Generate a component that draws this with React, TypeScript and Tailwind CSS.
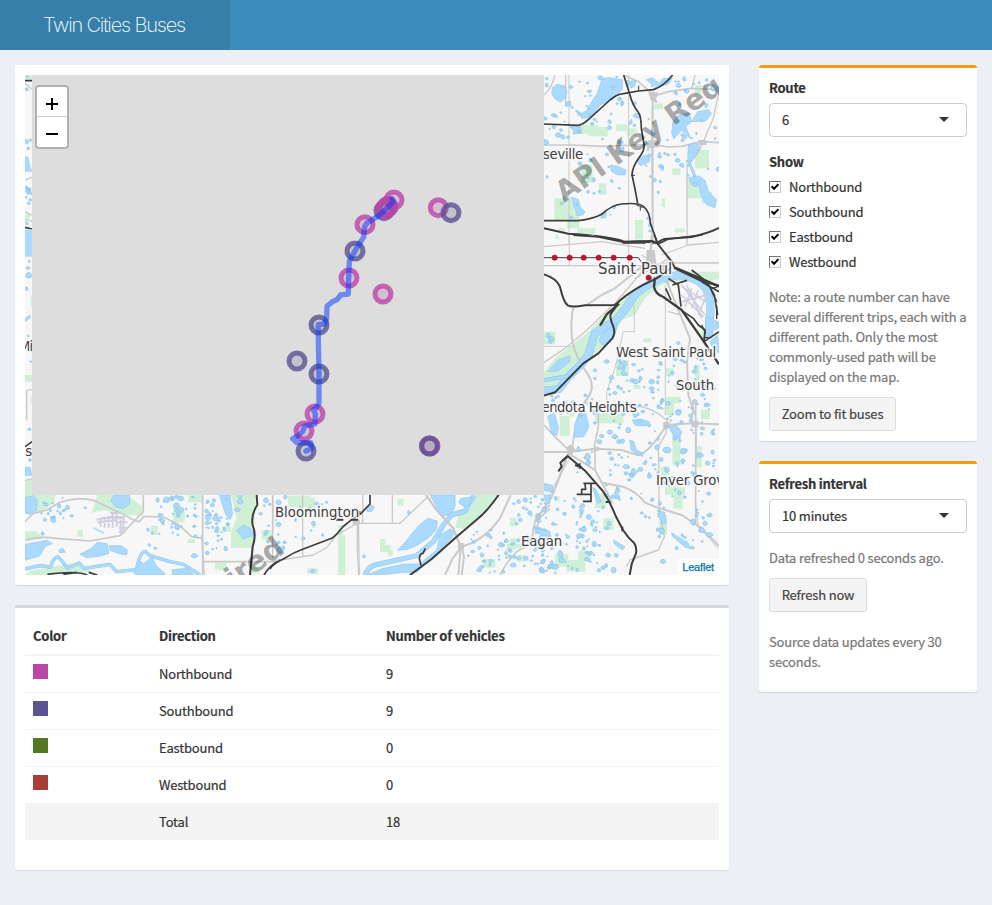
import React from "react";

const WATER = "#aadaff";
const SHORE = "#82bfe8";
const PARK = "#d0f0d5";
const ROAD = "#cacaca";
const RAIL = "#3d3d3d";

/* Each map sheet is drawn at three units to the pixel, from its own origin. */
function Sheet({ x, y, children }: { x: number; y: number; children: React.ReactNode }) {
  return <g transform={`translate(${x} ${y}) scale(0.33333)`}>{children}</g>;
}

function Blocks({ list }: { list: number[][] }) {
  return (
    <g fill={PARK}>
      {list.map((b, i) => (
        <rect key={i} x={b[0]} y={b[1]} width={b[2]} height={b[3]} />
      ))}
    </g>
  );
}

function Ponds({ list }: { list: number[][] }) {
  return (
    <g fill={WATER} stroke={SHORE} strokeWidth={2}>
      {list.map((p, i) => {
        const a = p[2] * (0.8 + (i % 3) * 0.2);
        const b = p[2] * (1.05 - (i % 4) * 0.12);
        return (
          <path
            key={i}
            d={`M${p[0] - a} ${p[1]}l${a * 0.6} ${-b}l${a * 0.9} ${b * 0.2}l${a * 0.5} ${b}l${-a * 0.6} ${b * 0.8}l${-a} ${-b * 0.2}z`}
          />
        );
      })}
    </g>
  );
}

/* Marsh ponds too small to be named: a repeatable scatter inside a box. */
function marsh(seed: number, n: number, x: number, y: number, w: number, h: number) {
  let s = seed;
  const next = () => {
    s = (s * 16807) % 2147483647;
    return s / 2147483647;
  };
  next();
  return Array.from({ length: n }, () => {
    const px = x + next() * w;
    const py = y + next() * h;
    const k = next();
    return [px, py, 2.5 + k * k * 4.5];
  });
}

function Water({ d }: { d: string }) {
  return <path d={d} fill={WATER} stroke={SHORE} strokeWidth={1.5} strokeLinejoin="round" />;
}
function River({ d, w }: { d: string; w: number }) {
  return (
    <g fill="none" strokeLinecap="butt" strokeLinejoin="round">
      <path d={d} stroke={SHORE} strokeWidth={w + 2} />
      <path d={d} stroke={WATER} strokeWidth={w} />
    </g>
  );
}
function Road({ d, w = 4 }: { d: string; w?: number }) {
  return <path d={d} fill="none" stroke={ROAD} strokeWidth={w} strokeLinejoin="round" />;
}
function Rail({ d, w = 6 }: { d: string; w?: number }) {
  return <path d={d} fill="none" stroke={RAIL} strokeWidth={w - 1} strokeLinejoin="round" />;
}

function Label({ x, y, len, size = 13.3, children }: { x: number; y: number; len: number; size?: number; children: string }) {
  return (
    <text
      x={x}
      y={y}
      textLength={len}
      fontSize={size}
      fill="#404040"
      stroke="#f7f7f7"
      strokeWidth={3}
      strokeOpacity={0.85}
      paintOrder="stroke"
      className="font-['DejaVu_Sans',sans-serif]"
    >
      {children}
    </text>
  );
}

function Watermark({ x, y, anchor, children }: { x: number; y: number; anchor: "start" | "end"; children: string }) {
  return (
    <text
      transform={`translate(${x} ${y}) rotate(-35)`}
      textAnchor={anchor}
      fontSize={29}
      fontWeight={700}
      fill="#000"
      fillOpacity={0.33}
      className="font-['DejaVu_Sans',sans-serif]"
    >
      {children}
    </text>
  );
}

function NorthEast() {
  return (
    <Sheet x={535} y={65}>
      <Blocks
        list={[
          [58, 400, 60, 65], [95, 440, 38, 50], [130, 180, 60, 26], [160, 186, 58, 28], [243, 178, 34, 20], [140, 300, 32, 54], [192, 355, 22, 34],
          [300, 465, 24, 58], [127, 490, 54, 16], [412, 310, 24, 20], [480, 255, 42, 55], [455, 345, 55, 55], [500, 380, 30, 36], [380, 400, 10, 26],
          [358, 116, 26, 16], [480, 60, 20, 25], [70, 490, 20, 12], [275, 190, 30, 22], [420, 490, 30, 12],
        ]}
      />
      <Road d="M102 30V540" w={3} />
      <Road d="M281 30V540" w={3} />
      <Road d="M353 80V540" w={6} />
      <Road d="M353 90L350 240L352 430" w={3} />
      <Road d="M456 540V305L490 262L505 230L535 160L552 80" w={4} />
      <Road d="M27 240L110 240L200 244L353 238L400 246L440 244L500 230L552 233" w={5} />
      <Road d="M265 30L310 50L345 80L360 92L400 80L470 70L552 74" w={5} />
      <Road d="M480 30L470 70M27 90Q50 70 60 30M92 30V125" w={4} />
      <path d="M340 225L370 225L375 245L335 252ZM340 82h30l-8 26h-14zM490 225h25v15h-25z" fill={ROAD} />
      <Water d="M52 68L66 58L88 62L96 78L92 98L76 112L58 100L50 84Z" />
      <Water d="M202 40L222 38L262 44L262 72L240 98L196 120L178 144L160 158L140 160L136 148L158 134L170 110L186 86Z" />
      <Water d="M92 112L106 108L108 122L94 124Z" />
      <Water d="M106 182L136 186L140 204L120 206Z" />
      <Water d="M288 48L302 46L300 64L286 70Z" />
      <Water d="M334 44L352 38L372 54L386 40L412 40L400 58L370 66L352 60Z" />
      <Water d="M414 168L430 150L462 144L470 170L452 184L468 222L440 196L416 222L410 204Z" />
      <Water d="M470 170L488 140L520 134L530 146L512 168Z" />
      <Water d="M460 240L480 232L494 244L484 270L464 292L458 280Z" />
      <River d="M462 290L478 330L482 356" w={6} />
      <Water d="M460 338L492 332L510 346L520 378L544 404L540 428L516 420L500 396L492 362L470 358Z" />
      <Water d="M226 300L248 304L274 316L270 330L248 330L228 318Z" />
      <Water d="M304 286L326 272L344 272L344 290L316 302Z" />
      <Water d="M110 396L130 404L136 426L150 440L144 450L126 452L120 432Z" />
      <Water d="M198 444L214 440L212 458L198 460Z" />
      <Ponds
        list={[
          [35, 60, 6], [32, 232, 9], [70, 210, 8], [78, 195, 6], [84, 216, 6], [172, 176, 5], [224, 170, 7], [256, 232, 9], [262, 252, 5], [176, 344, 7], [230, 348, 5],
          [306, 152, 10], [354, 202, 8], [374, 274, 6], [378, 304, 7], [428, 286, 9], [420, 268, 4], [440, 300, 6], [370, 382, 5], [236, 426, 7], [260, 256, 5], [345, 480, 6],
          [340, 460, 5], [346, 498, 5], [88, 400, 5], [80, 415, 5], [216, 268, 5], [514, 120, 7], [536, 68, 9], [515, 45, 4], [460, 300, 5], [480, 358, 9], [455, 78, 6],
        ]}
      />
      <Ponds list={marsh(11, 48, 30, 34, 270, 190)} />
      <Ponds list={marsh(17, 42, 330, 40, 220, 320)} />
      <Ponds list={marsh(23, 16, 30, 260, 240, 200)} />
      <Rail d="M27 177L130 181Q145 178 160 164L225 105Q245 88 265 86L310 78L355 74Q385 65 413 30" />
      <Rail d="M266 30L285 90Q292 120 310 142Q318 150 319 190L327 238Q330 255 312 278Q292 305 291 330L300 372L308 415" />
      <Rail d="M311 62V78M288 331h12M304 420l22 8M316 425v12" w={4} />
      <Rail d="M27 467H130Q175 462 200 448Q230 420 260 417Q310 412 325 424Q345 440 346 475L368 535" />
      <Rail d="M27 490L100 506Q210 512 260 527L272 533Q310 525 368 534Q380 520 400 521L470 516Q520 505 552 489" w={7} />
    </Sheet>
  );
}

function SaintPaul() {
  const stations = [[59, 68], [104, 68], [146, 68], [191, 68], [236, 68], [284, 68], [341, 128]];
  return (
    <Sheet x={535} y={235}>
      <path
        d="M27 410L60 370L150 300L200 250L290 170L350 130L410 110L552 110V130L500 150L440 135L380 150L330 190L300 240L260 255L235 310L150 380L80 430L60 480L27 480Z"
        fill={PARK}
      />
      <Blocks
        list={[
          [27, 290, 34, 38], [243, 375, 38, 48], [325, 310, 24, 12], [390, 400, 26, 22], [60, 0, 10, 10], [127, 0, 50, 5], [480, 390, 14, 70], [400, 485, 36, 20], [148, 500, 20, 12], [296, 450, 20, 12], [500, 280, 18, 24], [392, 486, 24, 54],
        ]}
      />
      <Road d="M27 92H340L400 84H552" w={4} />
      <Road d="M103 0V92M281 0V92M391 150V540M215 540V470L240 400L265 290H298V215L265 180M27 334H110" w={3} />
      <Road d="M27 382L90 340L150 290L240 205L300 135L345 80" w={4} />
      <Road d="M155 210L200 180L240 160L345 75L350 0" w={6} />
      <Road d="M115 215Q105 260 112 320Q125 370 150 405Q185 450 160 485L145 510" w={6} />
      <Road d="M370 90L400 150L440 250L465 310L456 380L460 480L480 540" w={6} />
      <Road d="M300 130L370 90L400 70M345 80L385 120M320 60L345 78M400 230L440 240M380 60L460 30L552 22M27 35L200 20L330 40" w={4} />
      <path d="M335 45h24l6 50h-34zM382 88l18 8l-4 16l-20-6z" fill={ROAD} />
      <River d="M27 467L72 462L98 428L140 386L160 360L172 320L180 295L215 272L245 254Q275 220 300 178Q340 145 380 130L430 120Q490 125 515 165Q532 210 524 255L520 310" w={22} />
      <Water d="M192 315L205 293L248 264L240 296L205 334Z" />
      <Water d="M38 410L70 375L106 362L104 380L70 408Z" />
      <River d="M27 436L60 430L100 424" w={10} />
      <Water d="M512 245L552 262V278L530 290L512 312Z" />
      <Water d="M526 318L548 300L552 355L528 330Z" />
      <g stroke="#d0cfe0" strokeWidth={5} fill="none">
        <path d="M440 150L510 240M455 150L500 250M442 200L522 178M440 155L512 200M440 180L505 245M470 160L450 215M490 165L470 220M515 180L490 240" />
      </g>
      <Ponds
        list={[
          [40, 302, 7], [50, 312, 8], [46, 320, 6], [430, 324, 7], [268, 386, 8], [254, 398, 6], [266, 400, 6], [292, 436, 8], [302, 440, 7], [316, 430, 7], [350, 440, 9], [350, 460, 7],
          [368, 442, 5], [412, 414, 6], [240, 474, 6], [222, 462, 5], [250, 456, 5], [180, 406, 5], [180, 430, 5], [430, 530, 9], [480, 500, 6], [512, 510, 6], [512, 400, 5], [440, 376, 5],
        ]}
      />
      <Ponds list={marsh(31, 60, 200, 370, 345, 165)} />
      <Ponds list={marsh(37, 14, 30, 475, 170, 60)} />
      <Rail d="M27 118Q65 130 75 155Q85 200 98 211Q110 218 150 211L240 210Q270 180 320 152L365 130L410 98" w={7} />
      <Rail d="M27 482L60 472L145 385L190 355L232 310Q242 295 235 275Q222 245 228 235L248 208" w={7} />
      <Rail d="M252 206L215 238L195 272" w={8} />
      <Rail d="M27 68H310L330 98" w={4} />
      <Rail d="M115 0L190 5L262 20L350 18L366 24L410 80L420 100L500 138L552 152" w={7} />
      <Rail d="M262 24h70M358 0L368 28L400 12L502 0" w={6} />
      <Rail d="M360 128L357 155Q362 178 385 186L440 225L500 310L552 388" w={8} />
      <Rail d="M400 130L430 150L438 215M412 150L456 136M392 160L408 195M470 105L515 140L538 180L548 240M500 140L552 170M516 138L545 200M440 226L475 250L490 270L510 285L507 320L552 290" w={6} />
      <Rail d="M510 145Q535 170 552 150M545 212v40M500 270l12 25M505 308h16" w={5} />
      <Rail d="M420 98L552 154" w={8} />
      {stations.map(([x, y]) => (
        <circle key={`${x}-${y}`} cx={x} cy={y} r={8} fill="#c8102e" stroke="#8d1024" strokeWidth={1.5} />
      ))}
    </Sheet>
  );
}

function SouthEast() {
  return (
    <Sheet x={535} y={400}>
      <Blocks
        list={[
          [74, 48, 30, 60], [180, 40, 85, 30], [180, 280, 32, 45], [412, 85, 24, 102], [412, 180, 34, 14], [415, 262, 28, 64], [390, 262, 60, 22], [482, 138, 18, 64], [372, 345, 24, 60], [60, 462, 40, 38], [95, 480, 56, 34], [130, 452, 36, 28], [205, 355, 30, 34], [498, 30, 26, 28], [392, 8, 20, 24],
          [378, 200, 26, 26], [104, 40, 14, 10], [60, 290, 14, 14],
        ]}
      />
      <Road d="M27 156H100L180 146L260 150L310 166Q340 160 395 75L470 70L552 73" w={6} />
      <Road d="M300 18Q350 20 395 60L393 100L370 140L372 230V320L388 410L370 450L285 480L275 500" w={4} />
      <Road d="M103 150L70 240L50 290L0 365" w={7} />
      <Road d="M110 150L108 170L55 260L30 325L0 350" w={3} />
      <Road d="M100 160L180 210L215 275L232 310M205 248L270 262Q310 280 330 308L365 322L440 345L500 385L552 438" w={6} />
      <Road d="M180 150V210M190 0V80L178 140M152 0Q120 50 112 150M27 75L60 110L105 155M482 0V375M470 72L475 0" w={5} />
      <Road d="M484 60V180M480 300L490 380L552 448" w={3} />
      <path d="M92 145l15-12l16 16l-14 16zM384 66h20v16h-20zM470 62h20v20h-20zM176 138l30 8l-30 10z" fill={ROAD} />
      <Water d="M120 70L134 40L152 38L162 80L146 110L118 112Z" />
      <Water d="M38 48L58 38L70 80L66 106L50 100Z" />
      <Water d="M292 60L320 58L344 66L332 78L300 76Z" />
      <Water d="M400 80L424 76L440 96L434 116L418 110Z" />
      <Water d="M284 120L296 124L304 150L326 160L310 166L288 150Z" />
      <Water d="M28 250L52 256L54 276L28 272Z" />
      <Water d="M372 334L388 336L394 370L380 372Z" />
      <Water d="M172 262L182 268L200 305L188 310Z" />
      <Water d="M410 398L460 430L466 446L448 440L412 408Z" />
      <Water d="M0 378L40 392L42 404L0 400Z" />
      <Water d="M236 420L270 440L262 450L238 432Z" />
      <Ponds
        list={[
          [158, 170, 10], [160, 188, 8], [240, 110, 8], [252, 125, 9], [280, 90, 8], [225, 96, 7], [366, 142, 9], [396, 150, 13], [444, 154, 8], [490, 166, 8], [444, 182, 7], [274, 200, 9], [296, 216, 10], [290, 226, 7], [316, 208, 7],
          [246, 290, 10], [248, 272, 7], [234, 290, 6], [430, 38, 10], [400, 10, 8], [90, 12, 7], [178, 432, 9], [146, 388, 9], [180, 390, 6], [76, 462, 10], [80, 480, 9], [60, 500, 10], [244, 466, 8], [236, 510, 8], [384, 484, 7], [222, 370, 7], [216, 384, 7],
          [380, 392, 8], [375, 310, 6], [500, 390, 10], [524, 404, 9], [474, 366, 9], [510, 370, 7], [156, 478, 7], [14, 430, 8], [20, 510, 8], [525, 345, 6],
        ]}
      />
      <Ponds list={marsh(41, 85, 125, 5, 420, 225)} />
      <Ponds list={marsh(47, 80, 5, 290, 220, 230)} />
      <Ponds list={marsh(53, 50, 210, 180, 335, 190)} />
      <Ponds list={marsh(59, 10, 360, 380, 150, 70)} />
      <Rail d="M82 182L98 168L150 212L205 275Q225 305 242 348L264 390Q280 415 298 430Q306 442 303 460L290 492L284 525" w={7} />
      <Rail d="M96 170L76 188L80 200L70 214M120 195l20 8M134 190v16M212 306h14M262 380v14" w={7} />
      <Rail d="M145 250H182M150 252L152 268H140V284M125 283H168M168 250V306M144 304H170" w={6} />
    </Sheet>
  );
}

function SouthWest() {
  return (
    <Sheet x={10} y={485}>
      <path d="M45 30H135V50L100 76L82 86L45 50ZM262 30H350L400 66V92L350 90L280 76L244 84ZM45 140L78 138L100 160L45 170Z" fill={PARK} />
      <path d="M663 30H738L728 188H663V140L680 100ZM60 258L200 232L250 262L120 270H45Z" fill={PARK} />
      <Blocks list={[[202, 135, 16, 20], [422, 122, 22, 28], [490, 66, 34, 46], [533, 162, 22, 12], [535, 30, 40, 22], [615, 232, 34, 22], [755, 135, 30, 28], [643, 124, 20, 16], [718, 245, 30, 20]]} />
      <Road d="M45 110L70 85L110 75L150 52Q200 35 250 46L340 88L372 106L388 110L402 94L460 96L505 118L545 155L578 160" w={5} />
      <Road d="M45 165Q90 152 140 160L240 168L330 152L400 80V30M578 30V270M578 230H810M788 30V140" w={5} />
      <Road d="M576 150L582 270" w={5} />
      <path
        d="M260 104l24-6l60 2M262 112l60-6M272 104v22M284 102v26M296 92v36M308 82v46M320 82v44M300 84h26M298 96h46M318 112h34M332 104v40M340 100v40M326 142h20M326 128h24"
        stroke="#d0cfe0"
        strokeWidth={6}
        fill="none"
      />
      <Water d="M45 38L70 32L82 46L80 76L58 88L45 84Z" />
      <Water d="M302 48L312 30H358L360 56L340 72L318 66Z" />
      <Water d="M45 178L80 172L110 166L128 176L106 184L88 214L45 226Z" />
      <Water d="M210 208L244 190L262 172L292 176L296 206L268 214L230 218Z" />
      <Water d="M298 182L334 182L352 196L350 210L326 206L300 196Z" />
      <Water d="M146 196L158 190L166 202L150 204Z" />
      <River d="M45 252L90 242L122 246Q130 215 145 216Q160 230 172 250L208 234L222 250L300 238L320 260L380 254Q390 200 405 199L420 212L480 230L520 238L570 270" w={8} />
      <Water d="M372 264L390 228L400 236L426 216L440 244L466 266L462 270H380Z" />
      <Water d="M486 254L530 250L552 270H488Z" />
      <Water d="M628 30H660L668 86L660 104L646 86Z" />
      <Water d="M680 136L700 120L720 130L734 150L700 162Z" />
      <Ponds
        list={[
          [160, 20, 5], [130, 105, 8], [185, 92, 5], [226, 68, 5], [98, 146, 5], [470, 44, 9], [486, 40, 9], [512, 40, 10], [500, 62, 8], [514, 75, 8], [504, 92, 6], [452, 104, 6], [414, 134, 5], [428, 144, 4], [553, 212, 8],
          [590, 78, 8], [594, 98, 8], [618, 100, 9], [622, 130, 7], [590, 175, 6], [592, 204, 5], [612, 46, 6], [690, 50, 9], [682, 74, 8], [690, 30, 9], [768, 46, 8], [752, 86, 5], [765, 148, 5], [418, 180, 4], [436, 190, 4], [555, 70, 4],
        ]}
      />
      <Ponds list={marsh(61, 30, 440, 34, 120, 120)} />
      <Ponds list={marsh(67, 30, 586, 34, 70, 160)} />
      <Ponds list={marsh(71, 18, 84, 34, 90, 80)} />
      <Ponds list={marsh(73, 12, 738, 34, 68, 150)} />
      <path d="M250 128L282 144" stroke={WATER} strokeWidth={5} />
      <Rail d="M740 30L742 60Q722 90 728 120Q740 150 728 185L720 270" w={7} />
      <Rail d="M112 268Q200 256 232 270M160 268L200 262M236 262L262 270M810 224Q780 240 762 270" w={6} />
    </Sheet>
  );
}

function South() {
  return (
    <Sheet x={270} y={485}>
      <Blocks list={[[54, 32, 66, 34], [120, 38, 14, 36], [204, 120, 14, 90], [204, 150, 22, 120], [330, 162, 16, 34], [330, 180, 32, 22], [354, 194, 14, 18], [112, 250, 32, 16], [382, 42, 18, 20], [720, 160, 20, 34], [710, 176, 50, 14], [640, 222, 36, 26], [740, 210, 24, 20], [720, 98, 20, 26], [570, 40, 24, 20], [126, 110, 12, 18]]} />
      <path d="M620 30H686L650 75L585 132L556 128L565 90L600 72Z" fill={PARK} />
      <Road d="M98 30V212M8 30V220M278 30V115M367 30V115M265 90L268 270M265 115H390L470 38" w={4} />
      <Road d="M0 230L130 210L170 188L200 150L262 115M262 100V190L266 270" w={4} />
      <Road d="M468 30L500 75L550 130L572 185L565 270M572 185Q640 170 690 100L722 30M575 185L548 220L525 270M575 185L582 215L575 270" w={6} />
      <Road d="M840 60L800 95L790 130L785 175L740 200L710 235L690 270M840 70L808 100L800 130" w={5} />
      <path d="M564 174h18v20h-18zM248 105h22v14h-22z" fill={ROAD} />
      <Water d="M382 196L405 172L430 140L450 118L474 100L502 108L500 132L476 158L440 182L410 194Z" />
      <Water d="M480 30H555L556 60L545 90L515 92L498 62Z" />
      <Water d="M290 270L340 250L400 238L450 236L500 195L510 150L540 132L556 140L545 160L490 215L440 262L400 262L330 270Z" />
      <River d="M285 270Q295 245 315 240L440 212L490 170L520 120L545 90L585 78L612 30" w={13} />
      <Road d="M468 30L500 75L550 130L572 185" w={6} />
      <Water d="M574 40L605 36L598 62L580 64L566 52Z" />
      <Water d="M290 66L300 58L314 66L304 80H292Z" />
      <Water d="M792 128L840 140V156L812 150Z" />
      <Water d="M822 30H840V56L826 48Z" />
      <Ponds
        list={[
          [46, 35, 7], [26, 52, 8], [140, 56, 6], [170, 52, 5], [130, 115, 6], [100, 160, 5], [158, 150, 5], [44, 172, 6], [30, 195, 9], [40, 188, 6], [282, 214, 5], [128, 258, 7], [416, 82, 5], [766, 45, 7], [796, 34, 4], [662, 228, 7], [636, 210, 6],
          [655, 150, 6], [700, 180, 5], [730, 240, 9], [768, 220, 6], [810, 186, 9], [818, 230, 7], [740, 116, 5],
        ]}
      />
      <Ponds list={marsh(79, 58, 590, 130, 248, 135)} />
      <Ponds list={marsh(83, 18, 720, 34, 118, 90)} />
      <Ponds list={marsh(89, 12, 14, 34, 150, 150)} />
      <Rail d="M0 252Q10 235 40 222Q70 202 100 192L185 160Q200 150 218 126L245 104L270 88L300 57V30" w={6} />
      <Rail d="M242 104h22M198 104h22M268 78v12" w={7} />
      <Rail d="M420 270L485 222L560 155L625 100Q650 80 686 30" w={7} />
      <Rail d="M453 242L448 220Q450 205 459 205L466 190" w={6} />
    </Sheet>
  );
}

function WestEdge() {
  return (
    <Sheet x={10} y={60}>
      <Blocks list={[[45, 45, 21, 14], [45, 945, 21, 20], [45, 460, 14, 16], [62, 710, 4, 30], [62, 1010, 4, 20], [45, 1258, 21, 50]]} />
      <Road d="M45 70L66 88M45 360L66 352M45 455L66 466M45 478L66 484M50 1080V992L66 988M45 1262L66 1256" w={4} />
      <Rail d="M45 62H66M45 502L66 507M45 1160L66 1145" w={6} />
      <rect x={45} y={508} width={21} height={82} fill={WATER} />
      <Water d="M45 290L54 292L60 322L66 334H45Z" />
      <Water d="M45 1222L60 1222L66 1246H45Z" />
      <River d="M45 378L66 404M45 782L60 768" w={6} />
      <Ponds list={[[52, 50, 3], [50, 88, 5], [48, 245, 8], [62, 240, 5], [55, 265, 4], [56, 430, 4], [58, 604, 4], [54, 624, 6], [56, 646, 8], [50, 686, 6], [55, 828, 3], [58, 1108, 5], [60, 1200, 5], [50, 490, 5], [63, 905, 3]]} />
      <Ponds list={marsh(97, 7, 46, 375, 18, 50)} />
    </Sheet>
  );
}

const PINK = "#bb46a9";
const PURPLE = "#5a5492";
const buses: [number, number, string][] = [
  [342, 92, PURPLE], [354, 80, PURPLE], [346, 87, PINK], [352, 80, PINK], [372, 60, PINK], [285, 134, PINK], [255, 213, PURPLE], [237, 294, PINK],
  [339, 342, PINK], [505, 83, PINK], [543, 98, PURPLE], [147, 435, PURPLE], [147, 582, PURPLE], [81, 543, PURPLE], [135, 702, PINK], [102, 753, PINK],
  [108, 813, PURPLE], [480, 798, PINK], [478, 798, PURPLE],
];

function BusMap() {
  return (
    <div className="relative h-[500px] w-[694px] overflow-hidden">
      <svg viewBox="25 75 694 500" className="block h-full w-full">
        <rect x={25} y={75} width={694} height={500} fill="#f7f7f7" />
        <NorthEast />
        <SaintPaul />
        <SouthEast />
        <SouthWest />
        <South />
        <WestEdge />
        <Label x={543} y={159} len={40}>seville</Label>
        <Label x={598} y={274} len={74} size={15}>Saint Paul</Label>
        <Label x={616} y={356.5} len={100}>West Saint Paul</Label>
        <Label x={676} y={390} len={38}>South</Label>
        <Label x={541.5} y={411.5} len={95}>endota Heights</Label>
        <Label x={656} y={484.5} len={76}>Inver Grove</Label>
        <Label x={521} y={546} len={41}>Eagan</Label>
        <Label x={275} y={517} len={84}>Bloomington</Label>
        <Label x={19} y={351} len={14}>Mi</Label>
        <Label x={20} y={456} len={12}>is</Label>
        <Watermark x={564} y={203} anchor="start">API Key Req</Watermark>
        <Watermark x={286} y={552} anchor="end">ired</Watermark>
        <rect x={32} y={75} width={512} height={420} fill="#ddd" />
        <Sheet x={270} y={180}>
          {buses.map(([x, y, c], i) => (
            <circle key={i} cx={x} cy={y} r={24} fill={c} fillOpacity={0.2} stroke={c} strokeOpacity={0.8} strokeWidth={15} />
          ))}
          <path
            d="M366 56L368 68L352 84L325 108L290 130L284 140L281 172L262 200L238 244L236 296L235 342L212 345L202 358L186 366L171 379L170 414L163 432L145 434V480L147 582V670L138 684L130 690L136 700L135 732L104 738L98 754L84 768L68 776L80 788L122 788L124 806L108 813"
            fill="none"
            stroke="#0033ff"
            strokeOpacity={0.5}
            strokeWidth={16}
            strokeLinecap="round"
            strokeLinejoin="round"
          />
        </Sheet>
      </svg>
      <div className="absolute left-[10px] top-[10px] w-[34px] overflow-hidden rounded-[4px] border-2 border-black/20 bg-clip-padding">
        <button aria-label="Zoom in" className="flex h-[30px] w-[30px] items-start justify-center border-b border-[#ccc] bg-white pt-[11px]">
          <svg viewBox="0 0 12 12" className="h-3 w-3"><path d="M0 6H12M6 0V12" stroke="#000" strokeWidth={2} /></svg>
        </button>
        <button aria-label="Zoom out" className="flex h-[30px] w-[30px] items-start justify-center bg-white pt-[11px]">
          <svg viewBox="0 0 12 12" className="h-3 w-3"><path d="M0 6H12" stroke="#000" strokeWidth={2} /></svg>
        </button>
      </div>
      <div className="absolute bottom-0 right-0 bg-white/70 px-[5px] font-['Liberation_Sans',sans-serif] text-[11px] leading-[16px] text-[#0078a8] [-webkit-text-stroke:0.25px]">Leaflet</div>
    </div>
  );
}

function Card({ accent = "", className = "", children }: { accent?: string; className?: string; children: React.ReactNode }) {
  return <section className={`rounded-[3px] bg-white p-[10px] shadow-[0_1px_1px_rgba(0,0,0,0.1)] ${accent} ${className}`}>{children}</section>;
}

function Select({ value }: { value: string }) {
  return (
    <div className="mt-[5px] flex h-[34px] items-center justify-between rounded-[4px] border border-[#ccc] bg-white pl-3 pr-[17px] text-[#333]">
      <span>{value}</span>
      <span className="mb-[2px] h-0 w-0 border-x-[5px] border-t-[5px] border-x-transparent border-t-[#333]" />
    </div>
  );
}

function Check({ label }: { label: string }) {
  return (
    <label className="flex h-5 items-center gap-2">
      <span className="flex h-3 w-3 items-center justify-center border border-b-[#ccc] border-l-[#777] border-r-[#ccc] border-t-[#777] bg-white">
        <svg viewBox="0 0 8 8" className="h-2 w-2"><path d="M0.5 3.2L3 5.8L7.5 1.2" fill="none" stroke="#000" strokeWidth={2} /></svg>
      </span>
      {label}
    </label>
  );
}

function Button({ width, children }: { width: string; children: string }) {
  return (
    <button className={`block h-[34px] rounded-[3px] border border-[#ddd] bg-[#f4f4f4] text-center text-[#444] ${width}`}>{children}</button>
  );
}

const directions = [
  { name: "Northbound", count: 9, swatch: "bg-[#bb46a9]" },
  { name: "Southbound", count: 9, swatch: "bg-[#5a5492]" },
  { name: "Eastbound", count: 0, swatch: "bg-[#537723]" },
  { name: "Westbound", count: 0, swatch: "bg-[#a93e36]" },
];

export default function App() {
  return (
    <div className="min-h-[905px] bg-[#ecf0f5] font-['Noto_Sans_CJK_JP',sans-serif] text-[13px] leading-5 tracking-[-0.18px] text-[#333] [-webkit-text-stroke:0.2px]">
      <header className="flex h-[50px] bg-[#3c8dbc]">
        <div className="flex w-[230px] items-center bg-[#367fa9] pl-[43px] font-['Inter',sans-serif] text-[20px] font-extralight tracking-[-1.17px] text-white [-webkit-text-stroke:0px]">
          <span className="whitespace-nowrap">Twin Cities Buses</span>
        </div>
      </header>
      <main className="flex items-start gap-[30px] p-[15px]">
        <div className="flex w-[714px] flex-col gap-5">
          <Card>
            <BusMap />
          </Card>
          <Card accent="border-t-[3px] border-[#d2d6de]" className="h-[265px]">
            <table className="w-full table-fixed border-collapse text-left">
              <colgroup>
                <col className="w-[126px]" />
                <col className="w-[227px]" />
                <col />
              </colgroup>
              <thead>
                <tr className="h-[37px] border-b-2 border-[#f4f4f4]">
                  <th className="px-2 py-0 font-bold tracking-[-0.25px]">Color</th>
                  <th className="px-2 py-0 font-bold tracking-[-0.25px]">Direction</th>
                  <th className="px-2 py-0 font-bold tracking-[-0.25px]">Number of vehicles</th>
                </tr>
              </thead>
              <tbody>
                {directions.map((d) => (
                  <tr key={d.name} className="h-[37px] border-b border-[#f4f4f4]">
                    <td className="px-2 pb-1"><div className={`h-[15px] w-[15px] ${d.swatch}`} /></td>
                    <td className="px-2">{d.name}</td>
                    <td className="px-2">{d.count}</td>
                  </tr>
                ))}
                <tr className="h-[37px] bg-[#f4f4f4]">
                  <td />
                  <td className="px-2">Total</td>
                  <td className="px-2">18</td>
                </tr>
              </tbody>
            </table>
          </Card>
        </div>
        <aside className="flex w-[218px] flex-col gap-5">
          <Card accent="border-t-[3px] border-[#f39c12]">
            <div className="font-bold tracking-[-0.25px]">Route</div>
            <Select value="6" />
            <div className="mt-[15px] font-bold tracking-[-0.25px]">Show</div>
            <div className="mt-[5px] flex flex-col gap-[5px]">
              {directions.map((d) => <Check key={d.name} label={d.name} />)}
            </div>
            <p className="mb-[10px] mt-[15px] whitespace-nowrap text-[#777]">
              Note: a route number can have<br />several different trips, each with a<br />different path. Only the most<br />commonly-used path will be<br />displayed on the map.
            </p>
            <Button width="w-[127px]">Zoom to fit buses</Button>
          </Card>
          <Card accent="border-t-[3px] border-[#f39c12]" className="pb-5">
            <div className="font-bold tracking-[-0.25px]">Refresh interval</div>
            <Select value="10 minutes" />
            <p className="mb-[10px] mt-[15px] text-[#777]">Data refreshed 0 seconds ago.</p>
            <Button width="w-[98px]">Refresh now</Button>
            <p className="mt-5 text-[#777]">Source data updates every 30<br />seconds.</p>
          </Card>
        </aside>
      </main>
    </div>
  );
}
